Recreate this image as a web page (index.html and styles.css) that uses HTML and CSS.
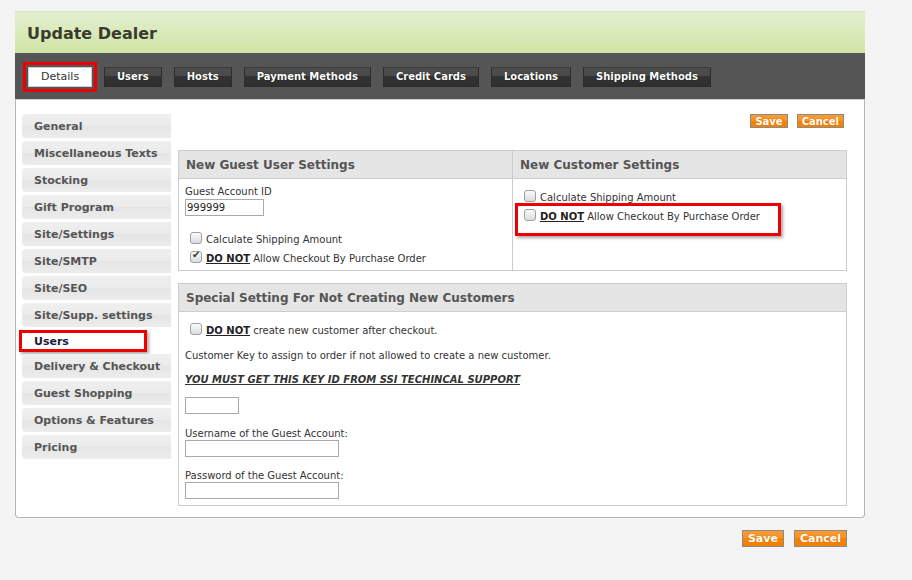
FILE: index.html
```html
<!DOCTYPE html>
<html lang="en">
<head>
    <meta charset="UTF-8">
    <title>Update Dealer</title>
    <link rel="stylesheet" href="styles.css">
</head>
<body>
    <div class="page">
        <!-- Шапка -->
        <div class="page-head">
            <h1>Update Dealer</h1>
        </div>

        <!-- Вкладки -->
        <div class="tabbar">
            <a class="tab active">Details</a>
            <a class="tab">Users</a>
            <a class="tab">Hosts</a>
            <a class="tab">Payment Methods</a>
            <a class="tab">Credit Cards</a>
            <a class="tab">Locations</a>
            <a class="tab">Shipping Methods</a>
        </div>

        <div class="panel">
            <ul class="side-nav">
                <li>General</li>
                <li>Miscellaneous Texts</li>
                <li>Stocking</li>
                <li>Gift Program</li>
                <li>Site/Settings</li>
                <li>Site/SMTP</li>
                <li>Site/SEO</li>
                <li>Site/Supp. settings</li>
                <li class="current">Users</li>
                <li>Delivery &amp; Checkout</li>
                <li>Guest Shopping</li>
                <li>Options &amp; Features</li>
                <li>Pricing</li>
            </ul>

            <div class="main">
                <div class="actions top">
                    <button class="btn small">Save</button>
                    <button class="btn small">Cancel</button>
                </div>

                <table class="settings">
                    <tr>
                        <th class="half-left">New Guest User Settings</th>
                        <th>New Customer Settings</th>
                    </tr>
                    <tr>
                        <td class="guest-cell">
                            <div class="field-label">Guest Account ID</div>
                            <input type="text" class="text-input w78" value="999999">
                            <label class="check-row first"><input type="checkbox" class="check"> Calculate Shipping Amount</label>
                            <label class="check-row"><input type="checkbox" class="check" checked> <u class="strong">DO NOT</u>&nbsp;Allow Checkout By Purchase Order</label>
                        </td>
                        <td class="customer-cell">
                            <label class="check-row"><input type="checkbox" class="check"> Calculate Shipping Amount</label>
                            <div class="callout">
                                <label class="check-row"><input type="checkbox" class="check"> <u class="strong">DO NOT</u>&nbsp;Allow Checkout By Purchase Order</label>
                            </div>
                        </td>
                    </tr>
                </table>

                <table class="settings special">
                    <tr>
                        <th>Special Setting For Not Creating New Customers</th>
                    </tr>
                    <tr>
                        <td class="special-cell">
                            <label class="check-row"><input type="checkbox" class="check"> <u class="strong">DO NOT</u>&nbsp;create new customer after checkout.</label>
                            <div class="field-label note">Customer Key to assign to order if not allowed to create a new customer.</div>
                            <div class="field-label warning">YOU MUST GET THIS KEY ID FROM SSI TECHINCAL SUPPORT</div>
                            <input type="text" class="text-input w54 key-input">
                            <div class="field-label gap user-label">Username of the Guest Account:</div>
                            <input type="text" class="text-input w154">
                            <div class="field-label gap">Password of the Guest Account:</div>
                            <input type="password" class="text-input w154">
                        </td>
                    </tr>
                </table>
            </div>
        </div>

        <div class="actions bottom">
            <button class="btn">Save</button>
            <button class="btn">Cancel</button>
        </div>
    </div>
</body>
</html>
```

FILE: styles.css
```css
* {
    margin: 0;
    padding: 0;
    box-sizing: border-box;
}

body {
    font-family: "DejaVu Sans", Verdana, sans-serif;
    font-size: 10px;
    color: #333;
    background: #f4f4f4;
}

.page {
    width: 850px;
    margin: 11px 0 0 15px;
}

/* Шапка */
.page-head {
    height: 42px;
    background: linear-gradient(#e3efd0, #cfe5a5);
    border-top: 1px solid #d6e6bd;
    padding: 11px 0 0 12px;
}

.page-head h1 {
    font-size: 16px;
    font-weight: bold;
    color: #3a3a2e;
    line-height: 22px;
}

/* Вкладки */
.tabbar {
    height: 46px;
    background: #555;
    padding: 14px 0 0 13px;
    display: flex;
    gap: 12px;
    align-items: flex-start;
}

.tab {
    height: 20px;
    line-height: 18px;
    padding: 0 12px;
    font-size: 10px;
    font-weight: bold;
    color: #fff;
    text-shadow: 0 0 1px #000;
    background: linear-gradient(#4d4d4d 0, #4a4a4a 45%, #333 45%, #2f2f2f 100%);
    border: 1px solid #2c2c2c;
    border-top-color: #3a3a3a;
    white-space: nowrap;
}

.tab.active {
    width: 64px;
    text-align: center;
    font-size: 11px;
    background: #fff;
    color: #333;
    font-weight: normal;
    text-shadow: none;
    border-color: #ccc;
    outline: 3px solid #e00;
    outline-offset: 2px;
}

/* Основная панель */
.panel {
    display: flex;
    gap: 7px;
    background: #fff;
    border: 1px solid #b5b5b5;
    border-top-color: #ccc;
    border-radius: 0 0 4px 4px;
    padding: 14px 17px 10px 6px;
    height: 419px;
}

.side-nav {
    list-style: none;
    width: 149px;
    flex-shrink: 0;
}

.side-nav li {
    height: 24px;
    line-height: 26px;
    margin-bottom: 3px;
    padding-left: 12px;
    font-size: 11px;
    font-weight: bold;
    color: #555;
    border-radius: 4px 0 0 4px;
    background: linear-gradient(#efefef, #ebebeb 50%, #e5e5e5 50%, #ececec);
}

.side-nav li.current {
    width: 128px;
    height: 22px;
    line-height: 17px;
    margin: 0 0 2px -3px;
    padding-left: 12px;
    background: #fff;
    color: #1c1c3a;
    border: 3px solid #e00;
    border-radius: 0;
    box-shadow: 2px 2px 3px rgba(0,0,0,0.35);
}

.main {
    flex: 1;
}

/* Кнопки */
.actions {
    display: flex;
    justify-content: flex-end;
}

.actions.top {
    gap: 9px;
    margin: 0 3px 22px 0;
}

.actions.bottom {
    gap: 10px;
    margin: 12px 18px 0 0;
}

.btn {
    font-family: inherit;
    font-size: 11px;
    font-weight: bold;
    color: #fff;
    height: 17px;
    line-height: 14px;
    padding: 0 5px;
    border: 1px solid #8a8a8a;
    background: linear-gradient(#f99b34, #f8911f 50%, #f68200 50%, #f48100);
    text-shadow: 0 0 1px #c86000;
}

.btn.small {
    font-size: 10px;
    height: 14px;
    line-height: 11px;
    padding: 0 4px;
}

/* Таблицы настроек */
.settings {
    width: 100%;
    border-collapse: collapse;
    border: 1px solid #ccc;
}

.settings th {
    height: 28px;
    background: #e5e5e5;
    border: 1px solid #ccc;
    text-align: left;
    padding: 0 7px;
    font-size: 12px;
    font-weight: bold;
    color: #555;
}

.settings th.half-left {
    width: 334px;
}

.settings td {
    vertical-align: top;
    border: 1px solid #ccc;
    padding: 0 6px;
}

.settings.special {
    margin-top: 12px;
}

.guest-cell {
    padding-top: 6px !important;
    padding-bottom: 2px !important;
}

.customer-cell {
    padding-top: 9px !important;
}

.special-cell {
    padding-top: 9px !important;
    padding-bottom: 6px !important;
}

.field-label {
    display: block;
    line-height: 14px;
}

.field-label.note {
    margin-top: 9px;
}

.field-label.warning {
    margin-top: 10px;
    font-weight: bold;
    font-style: italic;
    text-decoration: underline;
}

.field-label.gap {
    margin-top: 12px;
    margin-bottom: -1px;
}

.field-label.user-label {
    margin-top: 13px;
}

.text-input {
    display: block;
    height: 17px;
    border: 1px solid #aaa;
    font-family: inherit;
    font-size: 10px;
    color: #222;
    padding: 0 1px;
}

.w78 { width: 79px; }
.w54 { width: 54px; }
.w154 { width: 154px; }

.key-input {
    margin-top: 10px;
}

.check-row {
    display: flex;
    align-items: center;
    height: 19px;
    line-height: 19px;
    white-space: nowrap;
}

.check-row.first {
    margin-top: 14px;
}

.check {
    appearance: none;
    width: 12px;
    height: 12px;
    margin: -4px 4px 0 5px;
    border: 1px solid #a0a0a0;
    border-radius: 3px;
    background: linear-gradient(#fbfbfb, #dcdcdc);
    position: relative;
}

.check:checked::after {
    content: '\2714';
    position: absolute;
    left: 1px;
    top: -3px;
    font-size: 10px;
    color: #333;
}

.strong {
    font-weight: bold;
    color: #222;
}

.callout {
    width: 266px;
    margin: -4px 0 0 -4px;
    padding: 1px 0 7px 1px;
    border: 3px solid #e00;
    box-shadow: 2px 2px 3px rgba(0,0,0,0.35);
    position: relative;
}
```
